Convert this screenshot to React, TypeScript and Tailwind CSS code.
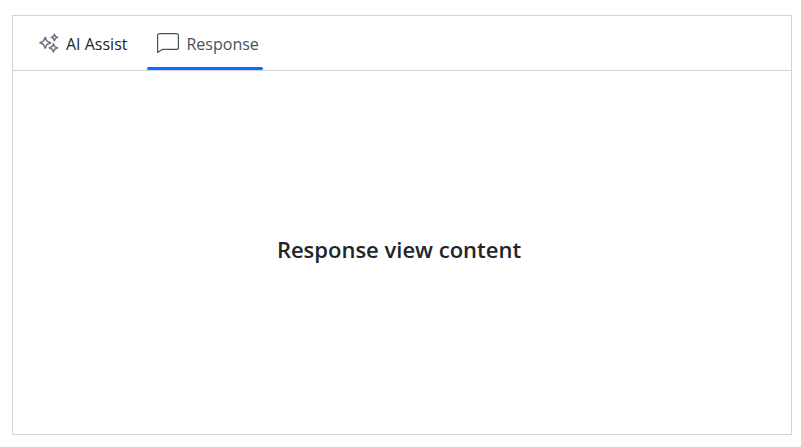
import { useState } from "react";

function SparkleIcon() {
  return (
    <svg width="20" height="20" viewBox="0 0 20 20" fill="none" stroke="#6b7280" strokeWidth="1.5" strokeLinejoin="round" aria-hidden="true">
      <path d="M6.2 4.4 L7.9 8.1 L11.6 9.8 L7.9 11.5 L6.2 15.2 L4.5 11.5 L0.9 9.8 L4.5 8.1Z" />
      <path d="M15.4 1.2 L16.4 3.4 L18.6 4.4 L16.4 5.4 L15.4 7.6 L14.4 5.4 L12.2 4.4 L14.4 3.4Z" />
      <path d="M14.4 10.8 L15.7 13.6 L18.6 14.9 L15.7 16.2 L14.4 19 L13.1 16.2 L10.2 14.9 L13.1 13.6Z" />
    </svg>
  );
}

function CommentIcon() {
  return (
    <svg width="22" height="20" viewBox="0 0 22 20" fill="none" stroke="#495057" strokeWidth="1.2" strokeLinejoin="round" aria-hidden="true">
      <path d="M2.5 0.6 H19.5 Q21.4 0.6 21.4 2.5 V14.5 Q21.4 16.4 19.5 16.4 H5.2 L0.6 19.4 V2.5 Q0.6 0.6 2.5 0.6Z" />
    </svg>
  );
}

const views = [
  { id: "assist", label: "AI Assist", content: "AI Assist view content", icon: <SparkleIcon /> },
  { id: "response", label: "Response", content: "Response view content", icon: <CommentIcon /> },
];

export default function App() {
  const [active, setActive] = useState("response");
  const current = views.find((view) => view.id === active) ?? views[1];

  return (
    <main className="flex h-screen bg-white pt-[15px] pr-[9px] pb-3 pl-3 font-['Open_Sans',sans-serif]">
      <section className="flex flex-1 flex-col border border-[#ced4da]">
        <div role="tablist" className="flex h-[55px] gap-4 border-b border-[#ced4da] pl-4">
          {views.map((view) => (
            <button
              key={view.id}
              id={`tab-${view.id}`}
              type="button"
              role="tab"
              aria-selected={view.id === active}
              aria-controls="view-panel"
              onClick={() => setActive(view.id)}
              className={`relative flex items-center gap-[7px] pr-1 pl-2.5 text-base ${view.id === active ? "text-[#495057]" : "text-[#212529]"}`}
            >
              {view.icon}
              <span className="pt-0.5">{view.label}</span>
              {view.id === active && (
                <span className="absolute inset-x-0 bottom-0 h-[3px] rounded-sm bg-[#0d6efd]" />
              )}
            </button>
          ))}
        </div>
        <div id="view-panel" role="tabpanel" aria-labelledby={`tab-${active}`} className="flex flex-1 items-center justify-center pr-1.5 pb-1.5">
          <h1 className="text-[22px] font-semibold text-[#212529]">{current.content}</h1>
        </div>
      </section>
    </main>
  );
}
